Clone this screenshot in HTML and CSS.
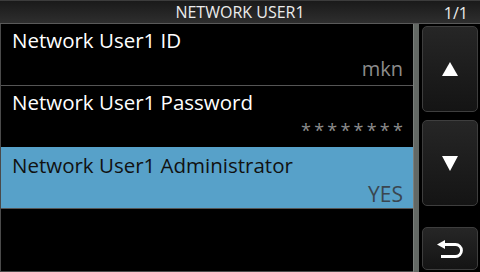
FILE: index.html
```html
<!DOCTYPE html>
<html lang="en">
<head>
  <meta charset="UTF-8" />
  <title>NETWORK USER1</title>
  <link rel="stylesheet" href="styles.css">
</head>
<body>
  <div class="screen">

    <!-- Title bar -->
    <header class="titlebar">
      <span class="title">NETWORK USER1</span>
      <span class="page">1/1</span>
    </header>

    <div class="main">
      <!-- Menu list -->
      <ul class="list">
        <li class="row">
          <span class="label">Network User1 ID</span>
          <span class="value">mkn</span>
        </li>
        <li class="row">
          <span class="label">Network User1 Password</span>
          <span class="value stars">********</span>
        </li>
        <li class="row selected">
          <span class="label">Network User1 Administrator</span>
          <span class="value">YES</span>
        </li>
      </ul>

      <div class="scrollbar"></div>

      <!-- Side buttons -->
      <div class="buttons">
        <div class="btn btn-big">
          <svg width="16" height="14" viewBox="0 0 16 14"><polygon points="8,0 16,14 0,14" fill="#fff"/></svg>
        </div>
        <div class="btn btn-big">
          <svg width="16" height="15" viewBox="0 0 16 15"><polygon points="0,0 16,0 8,15" fill="#fff"/></svg>
        </div>
        <div class="btn btn-back">
          <svg width="27" height="18" viewBox="0 0 27 18">
            <polygon points="0,4.5 8,0 8,9" fill="#fff"/>
            <path d="M7 4.5 H18.5 A6 6 0 0 1 18.5 16.5 H4" fill="none" stroke="#fff" stroke-width="2.8"/>
          </svg>
        </div>
      </div>
    </div>

  </div>
</body>
</html>
```

FILE: styles.css
```css
* {
  margin: 0;
  padding: 0;
  box-sizing: border-box;
}

body {
  background: #000;
  font-family: 'Open Sans', 'Noto Sans', sans-serif;
}

.screen {
  width: 480px;
  height: 272px;
  background: #000;
  overflow: hidden;
  display: flex;
  flex-direction: column;
}

/* Title bar */
.titlebar {
  position: relative;
  height: 24px;
  border-top: 1px solid #3c3c3c;
  border-bottom: 1px solid #5a5a5a;
  background: linear-gradient(#1a1a1a, #2e2e2e);
  display: flex;
  align-items: center;
  justify-content: center;
  color: #ececec;
  font-size: 16px;
}

.titlebar .page {
  position: absolute;
  right: 12px;
  top: 1px;
}

.main {
  flex: 1;
  display: flex;
}

/* List */
.list {
  list-style: none;
  width: 413px;
  border-left: 1px solid #4a4a4a;
  border-bottom: 1px solid #4a4a4a;
  display: flex;
  flex-direction: column;
}

.row {
  height: 62px;
  border-bottom: 1px solid #555;
  display: flex;
  flex-direction: column;
  padding: 3px 10px 0 11px;
  color: #fff;
}

.row .label {
  font-size: 20.5px;
  line-height: 27px;
}

.row .value {
  align-self: flex-end;
  margin-top: 1px;
  font-size: 20px;
  line-height: 27px;
  color: #8c8c8c;
}

.row .stars {
  font-size: 18px;
  letter-spacing: 3.2px;
  margin-right: -3px;
}

.row.selected {
  background: #57a1c9;
  color: #111;
  border-top: 1px solid #57a1c9;
  margin-top: -1px;
  padding-top: 4px;
}

.row.selected .value {
  color: #3a4650;
  font-size: 21px;
  margin-top: 2px;
}

/* Scrollbar */
.scrollbar {
  width: 6px;
  background: #636864;
  border-left: 1px solid #7a7f7b;
}

/* Buttons */
.buttons {
  width: 56px;
  margin-left: 3px;
  padding-top: 2px;
  display: flex;
  flex-direction: column;
  gap: 8px;
}

.btn {
  border: 1px solid #3e3e3e;
  border-radius: 5px;
  background: linear-gradient(#262626, #141414);
  display: flex;
  align-items: center;
  justify-content: center;
}

.btn-big {
  height: 86px;
}

.btn-back {
  height: 43px;
  margin-top: 13px;
}
```
